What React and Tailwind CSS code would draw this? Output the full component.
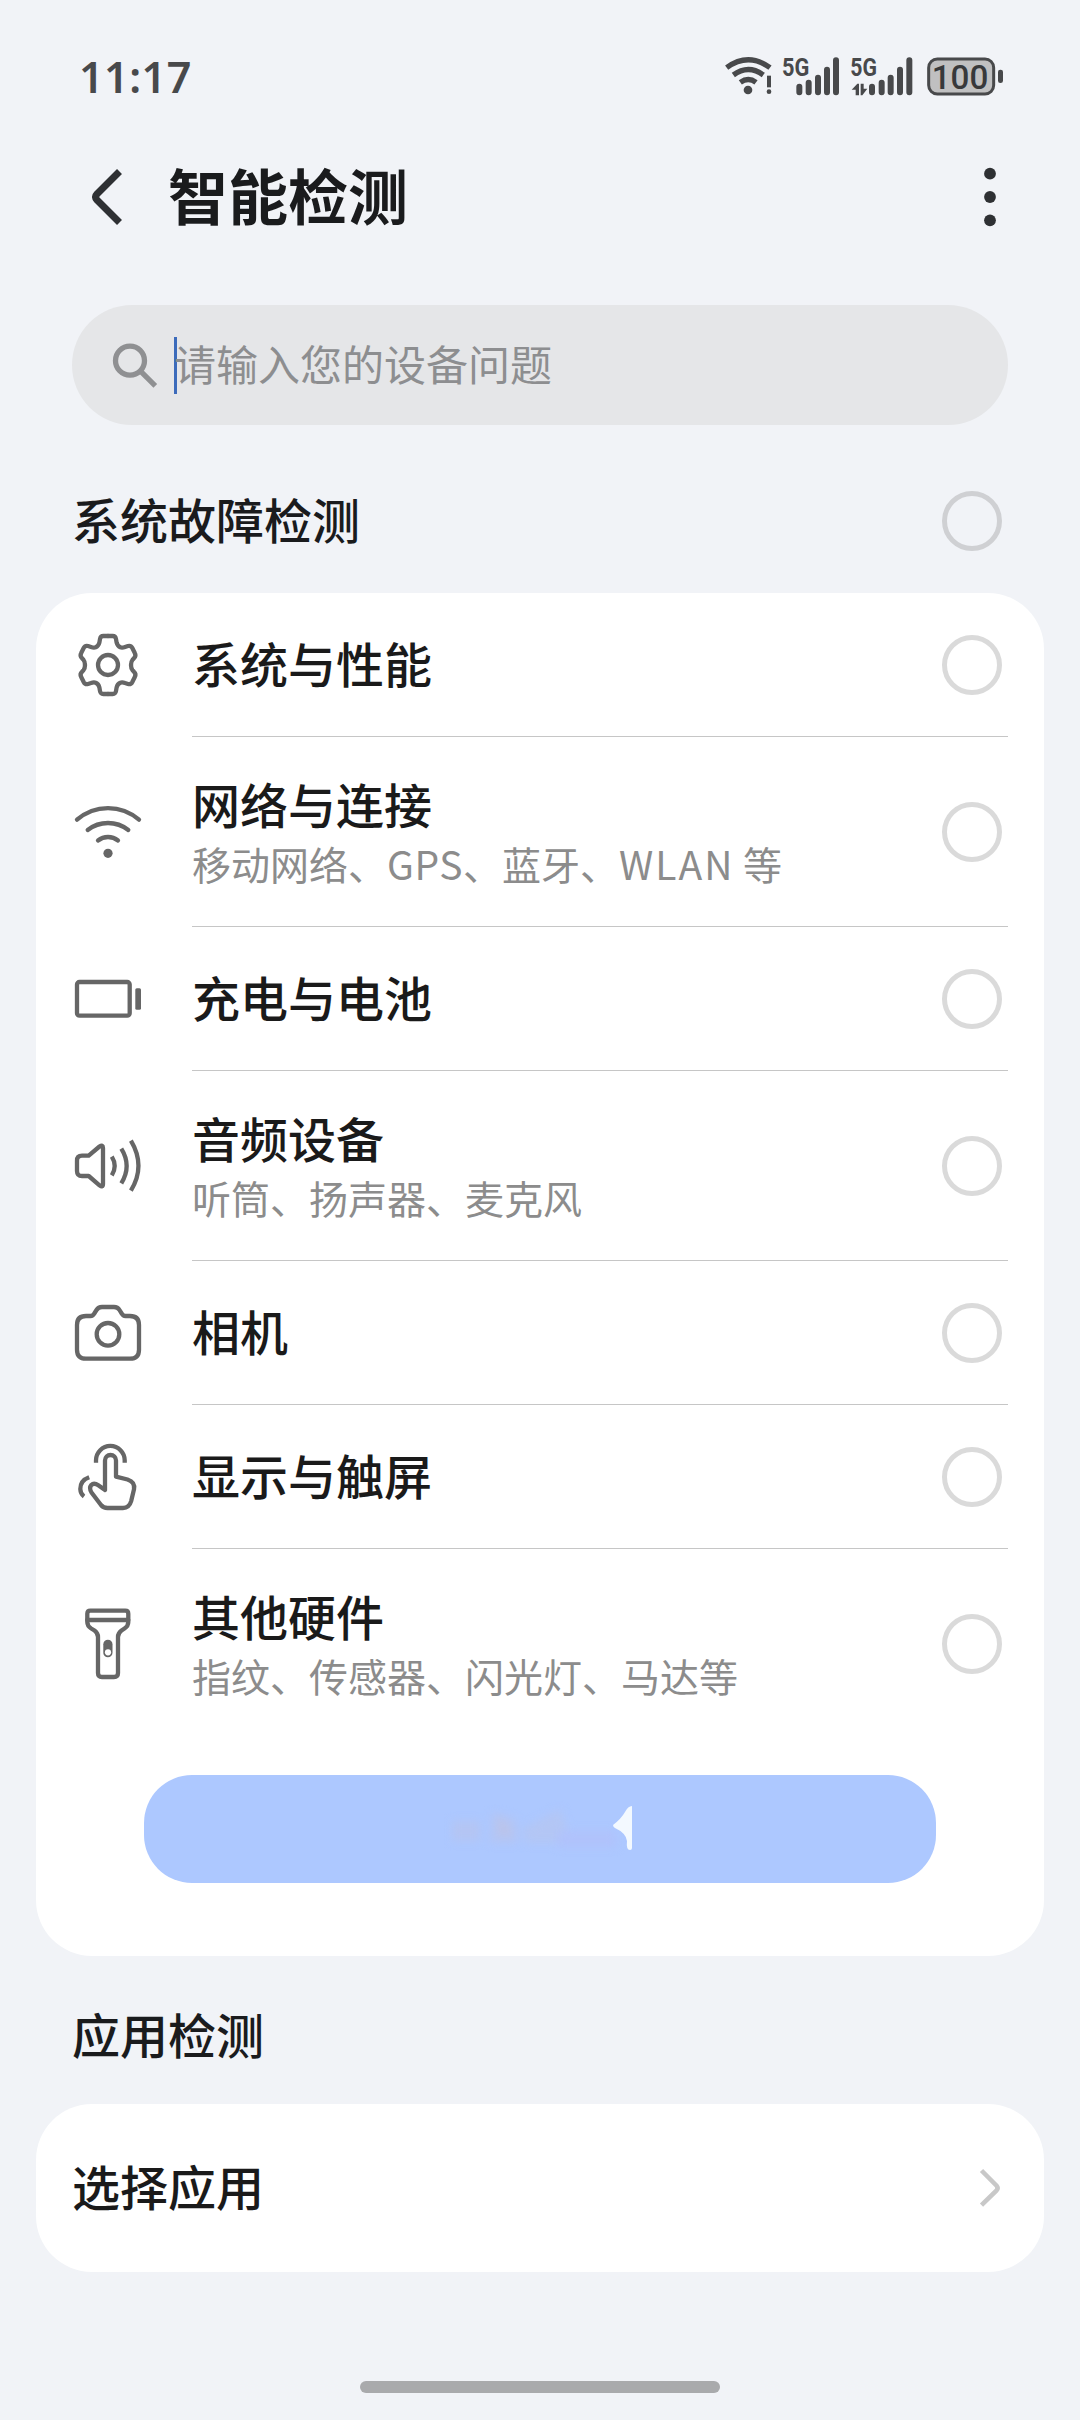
import React, { useState } from "react";

const GearIcon = () => (
  <>
    {["", "matrix(-1 0 0 1 72 0)", "matrix(1 0 0 -1 0 72)", "matrix(-1 0 0 -1 72 72)"].map((t) => (
      <path
        key={t}
        transform={t || undefined}
        d="M36 7H40.7Q43.5 7 44 10L44.6 13.5Q45.5 17 48.2 18.2Q50 19.2 53 18L56 17Q58.8 16.2 60.2 18.8L62.8 24Q64.4 27 62 29.2L60.5 30.8Q59 32.5 59 36"
      />
    ))}
    <circle cx="36" cy="36" r="10" />
  </>
);

const WifiIcon = () => (
  <>
    <path d="M5 23.7A47 47 0 0 1 67 23.7" />
    <path d="M15.7 34A33 33 0 0 1 56.3 34" />
    <path d="M26 44.5A16 16 0 0 1 46 44.5" />
    <circle cx="36" cy="57.3" r="4.6" fill="currentColor" stroke="none" />
  </>
);

const BatteryIcon = () => (
  <>
    <rect x="5" y="19" width="52.7" height="33.7" rx="2.5" />
    <rect x="63.3" y="25.3" width="5.7" height="21.4" rx="1.5" fill="currentColor" stroke="none" />
  </>
);

const SpeakerIcon = () => (
  <>
    <path d="M10 25.7H16.7L27.5 16.5Q31 14 31 18V54Q31 58 27.5 55.3L16.7 46H10Q5 46 5 41V30.7Q5 25.7 10 25.7Z" />
    <path strokeLinecap="butt" d="M39.8 26.7Q45.6 36 39.8 45.3M49.3 18.7Q60 36 49.3 53.3M58.9 10.7Q74 36 58.9 60.7" />
  </>
);

const CameraIcon = () => (
  <>
    <path d="M5 28Q5 19 14 19H18.5Q21 19 22.3 16.5L24.5 13Q26.3 10 30 10H42Q45.7 10 47.5 13L49.7 16.5Q51 19 53.5 19H58Q67 19 67 28V52.7Q67 61.7 58 61.7H14Q5 61.7 5 52.7Z" />
    <circle cx="36" cy="37.3" r="11.3" />
  </>
);

const TouchIcon = () => (
  <>
    <path strokeLinecap="butt" d="M24 21.7V19.3A14.3 14.3 0 0 1 52.7 19.3V21.7" />
    <path strokeLinecap="butt" d="M17.2 36.3Q8.3 39.5 8.3 48Q8.5 53 12 55.5" />
    <path d="M33 49V19.5A5.5 5.5 0 0 1 44 19.5V35.7L55.5 38.5Q63.3 41 62 48.3L59.2 60Q57.2 67 51 67H35.5Q31.5 67 29 64L19.5 51.5Q16.8 47 19.3 44Q22 41.2 26.3 44.3Z" />
  </>
);

const TorchIcon = () => (
  <>
    <path d="M18.3 2.7H53.3Q56.3 2.7 56.3 5.7V14Q56.3 18 52.5 20.5L49.5 22.5Q46 25 46 29V65Q46 69 42 69H30Q26 69 26 65V29Q26 25 22.5 22.5L19.2 20.5Q15.3 18 15.3 14V5.7Q15.3 2.7 18.3 2.7Z" />
    <path d="M15.3 12H56.3" />
    <rect x="31.3" y="31.7" width="9.2" height="17.6" rx="4.6" fill="currentColor" stroke="none" />
    <circle cx="36" cy="44.3" r="3.1" fill="#fff" stroke="none" />
  </>
);

const networkDesc = (
  <>
    移动网络、<span className="tracking-[0.5px]">GPS</span>、蓝牙、<span className="tracking-[2px]">WLAN</span> 等
  </>
);

const items = [
  { id: "system", title: "系统与性能", icon: GearIcon },
  { id: "network", title: "网络与连接", desc: networkDesc, icon: WifiIcon },
  { id: "battery", title: "充电与电池", icon: BatteryIcon },
  { id: "audio", title: "音频设备", desc: "听筒、扬声器、麦克风", icon: SpeakerIcon },
  { id: "camera", title: "相机", icon: CameraIcon },
  { id: "screen", title: "显示与触屏", icon: TouchIcon },
  { id: "other", title: "其他硬件", desc: "指纹、传感器、闪光灯、马达等", icon: TorchIcon },
];

function StatusBar() {
  return (
    <div className="flex h-[120px] items-start justify-between pl-[79px] pr-[60px] pt-10 text-[#48494b]">
      <span className="mt-[7px] font-['Noto_Sans'] text-[43px] leading-[60px] font-semibold tracking-[0.5px]">11:17</span>
      <svg width="320" height="80" viewBox="0 0 960 240" fill="none" stroke="currentColor">
        <path strokeWidth="16" d="M80 83Q145 36 210 83M100 105Q145 72 190 105M121 127Q145 110 168 127" />
        <circle cx="144" cy="150" r="13" fill="currentColor" stroke="none" />
        <path strokeWidth="12" d="M207 107V142" />
        <circle cx="207" cy="155" r="7" fill="currentColor" stroke="none" />

        <g strokeWidth="18" strokeLinecap="round">
          <path d="M298 140V157M326 128V157M354 113V157M381 89V157M408 61V157" />
          <path d="M516 140V157M545 128V157M572 113V157M600 89V157M628 61V157" />
        </g>
        <g fill="currentColor" stroke="none" fontFamily="Roboto, sans-serif" fontWeight="700">
          <text x="246" y="108" fontSize="77" textLength="82" lengthAdjust="spacingAndGlyphs">5G</text>
          <text x="451" y="108" fontSize="77" textLength="80" lengthAdjust="spacingAndGlyphs">5G</text>
        </g>
        <path fill="currentColor" stroke="none" d="M455 149L472 131H477V166H467V149ZM482 131H491V146H502L487 166H482Z" />

        <rect x="686" y="57" width="195" height="105" rx="26" fill="#c0c0c1" strokeWidth="9" />
        <rect x="894" y="89" width="15" height="40" rx="7" fill="currentColor" stroke="none" />
        <text x="695" y="146" fontSize="101" textLength="170" lengthAdjust="spacingAndGlyphs" fill="#38393b" stroke="none" fontFamily="Roboto, sans-serif" fontWeight="500">100</text>
      </svg>
    </div>
  );
}

function Radio({ checked, onClick, dark }) {
  return (
    <button
      onClick={onClick}
      className={`flex h-[60px] w-[60px] shrink-0 items-center justify-center rounded-full border-5 ${
        dark ? "border-[#cfd0d3]" : "border-[#dadada]"
      }`}
    >
      {checked && <span className="h-8 w-8 rounded-full bg-[#3f7bf5]"></span>}
    </button>
  );
}

function ItemRow({ item, last, checked, onToggle }) {
  const Icon = item.icon;
  return (
    <div className={`flex pl-9 pr-9 ${item.desc ? "h-[190px]" : "h-[144px]"}`}>
      <div className="flex w-[120px] items-center text-[#666666]">
        <svg width="72" height="72" viewBox="0 0 72 72" fill="none" stroke="currentColor" strokeWidth="4.3" strokeLinecap="round" strokeLinejoin="round">
          <Icon />
        </svg>
      </div>
      <div className={`flex flex-1 items-center justify-between border-b pr-[6px] ${last ? "border-transparent" : "border-[#c6c6c6]"}`}>
        <div className={`flex flex-col ${item.desc ? "" : "pb-[5px]"}`}>
          <h3 className="text-[48px] leading-[60px] font-medium text-[#1a1a1a]">{item.title}</h3>
          {item.desc && <p className="mt-[2px] text-[39px] leading-[56px] text-[#8c8c8c]">{item.desc}</p>}
        </div>
        <Radio checked={checked} onClick={onToggle} />
      </div>
    </div>
  );
}

export default function App() {
  const [selected, setSelected] = useState([]);

  const allSelected = selected.length === items.length;

  const toggle = (id) => {
    setSelected((prev) => (prev.includes(id) ? prev.filter((x) => x !== id) : [...prev, id]));
  };

  return (
    <div className="flex h-[2420px] w-[1080px] flex-col overflow-hidden bg-[#f1f3f7] font-['Noto_Sans_CJK_SC',sans-serif]">
      <StatusBar />

      <div className="flex h-[154px] items-center justify-between pl-[84px] pr-[78px]">
        <div className="flex items-center">
          <svg width="44" height="64" viewBox="0 0 44 64" fill="none" stroke="#2e3033" strokeWidth="7" strokeLinejoin="round">
            <path d="M35.5 6.5L13 29Q10.2 32 13 35L35.5 57.5" />
          </svg>
          <h1 className="ml-10 pb-[6px] text-[60px] leading-[80px] font-bold text-[#1a1b1d]">智能检测</h1>
        </div>
        <svg width="24" height="64" viewBox="0 0 24 64" fill="#2e3033">
          <circle cx="12" cy="8.7" r="5.9" />
          <circle cx="12" cy="32" r="5.9" />
          <circle cx="12" cy="55.3" r="5.9" />
        </svg>
      </div>

      <div className="mx-[72px] mt-[31px] flex h-[120px] items-center rounded-full bg-[#e5e6e8] pl-9">
        <svg width="60" height="60" viewBox="0 0 60 60" fill="none" stroke="#8f9092" strokeWidth="5.3">
          <circle cx="22" cy="25.7" r="14.5" />
          <path d="M32.5 36.2L47.3 50.8" />
        </svg>
        <span className="ml-[6px] h-[57px] w-[3px] bg-[#3c6bbb]"></span>
        <span className="-ml-[3px] pb-1 text-[42px] leading-[60px] text-[#8d8e90]">请输入您的设备问题</span>
      </div>

      <div className="flex h-[168px] items-center justify-between pl-[72px] pr-[78px] pt-6">
        <h2 className="pb-[6px] text-[48px] leading-[64px] font-medium text-[#1a1b1d]">系统故障检测</h2>
        <Radio dark checked={allSelected} onClick={() => setSelected(allSelected ? [] : items.map((i) => i.id))} />
      </div>

      <div className="mx-9 h-[1363px] rounded-[56px] bg-white">
        {items.map((item, i) => (
          <ItemRow
            key={item.id}
            item={item}
            last={i === items.length - 1}
            checked={selected.includes(item.id)}
            onToggle={() => toggle(item.id)}
          />
        ))}
        <button className="mx-[108px] mt-9 flex h-[108px] w-[792px] items-center justify-center rounded-[48px] bg-[#adc8ff]">
          <svg width="192" height="60" viewBox="0 0 192 60">
            <defs>
              <filter id="smudge" x="-20%" y="-40%" width="140%" height="180%" colorInterpolationFilters="sRGB">
                <feGaussianBlur stdDeviation="4" />
              </filter>
              <filter id="soft" colorInterpolationFilters="sRGB">
                <feGaussianBlur stdDeviation="0.7" />
              </filter>
            </defs>
            <g filter="url(#smudge)">
              <path d="M8 22H36V42H8ZM48 14L72 20L74 44H46Z" fill="#b4c5f4" />
              <path d="M54 14L68 36H56Z" fill="#bdc4e8" />
              <path d="M78 30L116 10L128 44H82Z" fill="#b3c6f5" />
              <path d="M114 32H172V48H114Z" fill="#b0c2fc" />
            </g>
            <path d="M188 7Q184 7 181 13Q177 20 169 26Q169 28 171 29Q182 34 183 42Q182 51 186 51Q188 51 188 49Z" fill="#f3f9ff" filter="url(#soft)" />
          </svg>
        </button>
      </div>

      <div className="flex h-[148px] items-center pl-[72px] pt-[5px]">
        <h2 className="text-[48px] leading-[64px] font-medium text-[#1a1b1d]">应用检测</h2>
      </div>

      <div className="mx-9 flex h-[168px] items-center justify-between rounded-[56px] bg-white pl-9 pr-[42px]">
        <span className="pb-[7px] text-[48px] leading-[64px] font-medium text-[#1a1a1a]">选择应用</span>
        <svg width="24" height="40" viewBox="0 0 24 40" fill="none" stroke="#c8c8c8" strokeWidth="4.6">
          <path d="M3.5 2.5L18.6 17.7Q20.6 20 18.6 22.3L3.5 37.2" />
        </svg>
      </div>

      <div className="mt-auto flex justify-center pb-[27px]">
        <div className="h-3 w-[360px] rounded-full bg-[#a9aaac]"></div>
      </div>
    </div>
  );
}
